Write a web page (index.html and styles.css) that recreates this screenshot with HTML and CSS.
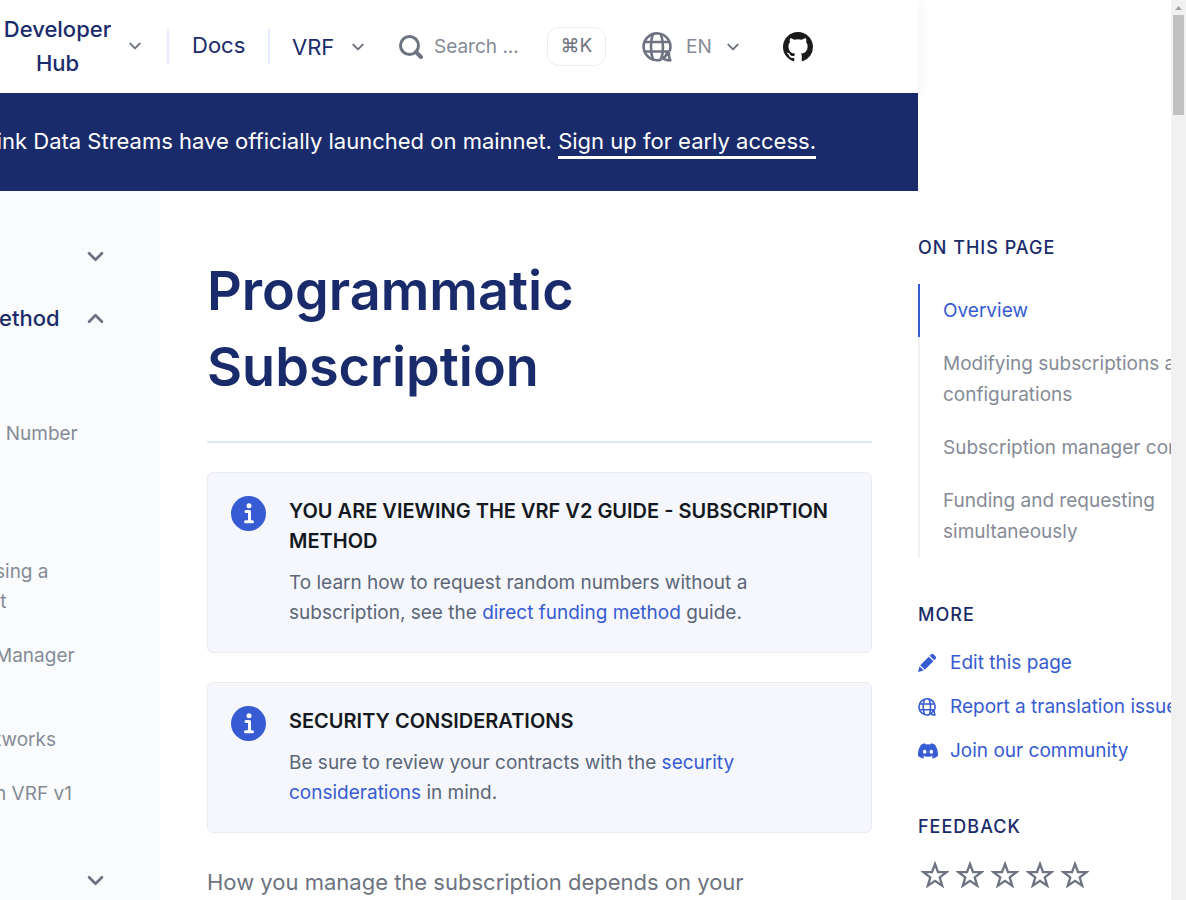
FILE: index.html
```html
<!DOCTYPE html>
<html lang="en">
<head>
<meta charset="utf-8">
<meta name="viewport" content="width=device-width, initial-scale=1">
<title>Programmatic Subscription</title>
<link rel="stylesheet" href="styles.css">
</head>
<body>
<svg class="defs" aria-hidden="true">
  <symbol id="down" viewBox="0 0 18 12"><path d="M2 2.5l7 7 7-7" fill="none" stroke="currentColor" stroke-width="3" stroke-linecap="round" stroke-linejoin="round"/></symbol>
  <symbol id="globe" viewBox="0 0 30 30">
    <g fill="none" stroke="currentColor" stroke-width="2.6" stroke-linejoin="round">
      <path d="M27.600 19.400A13.400 13.400 0 1 0 19.500 27.400"/>
      <path d="M11 28C8.300 20 8.300 9 11 1.800M18.500 1.800C20.800 7 21.200 13 20.800 19.500M2 10h26M2 19.500h25.500"/>
      <path d="M27 20c-.4 3 .2 5.800 1.300 8.300-2.800.2-5.500-.5-7.800-1.900 2.500-1.200 4.200-3.500 4.800-6.400"/>
      <path d="M20.800 19.500c-.3 3-.9 5-1.800 7.500"/>
    </g>
  </symbol>
  <symbol id="info" viewBox="0 0 35 35">
    <circle cx="17.5" cy="17.500" r="17.500" fill="#375bd2"/>
    <circle cx="18" cy="9.800" r="2.500" fill="#fff"/>
    <path d="M15 15.500h3.500v10M14.500 25.800h7" fill="none" stroke="#fff" stroke-width="3" stroke-linecap="round" stroke-linejoin="round"/>
  </symbol>
  <symbol id="star" viewBox="0 0 28 28"><path d="M14 3l3 8.200h8.500l-6.800 5.200 2.500 8.300-7.200-4.900-7.200 4.900 2.500-8.300-6.800-5.200H11z" fill="none" stroke="currentColor" stroke-width="2.300"/></symbol>
</svg>
<div class="page">
  <div class="shell">
    <header class="header">
      <button class="hub" type="button"><span class="hub-name">Developer Hub</span><svg class="chev"><use href="#down"/></svg></button>
      <a class="docs" href="#docs">Docs</a>
      <button class="product" type="button">VRF<svg class="chev"><use href="#down"/></svg></button>
      <label class="search">
        <svg class="search-icon" viewBox="0 0 24 24" aria-hidden="true"><circle cx="10.500" cy="10.500" r="9" fill="none" stroke="currentColor" stroke-width="3"/><path d="M17 17l5 5" stroke="currentColor" stroke-width="4" stroke-linecap="round"/></svg>
        <input class="search-input" type="text" placeholder="Search ..." aria-label="Search">
      </label>
      <kbd class="shortcut">⌘K</kbd>
      <label class="language"><svg class="language-icon"><use href="#globe"/></svg>
        <select class="language-select" aria-label="Language"><option>EN</option></select><svg class="chev"><use href="#down"/></svg></label>
      <a class="github" href="#github" aria-label="GitHub"><svg viewBox="0 0 16 16"><path fill="currentColor" d="M8 0C3.58 0 0 3.58 0 8c0 3.54 2.29 6.53 5.47 7.59.4.07.55-.17.55-.38 0-.19-.01-.82-.01-1.49-2.01.37-2.53-.49-2.69-.94-.09-.23-.48-.94-.82-1.13-.28-.15-.68-.52-.01-.53.63-.01 1.08.58 1.23.82.72 1.21 1.87.87 2.33.66.07-.52.28-.87.51-1.07-1.78-.2-3.64-.89-3.64-3.95 0-.87.31-1.59.82-2.15-.08-.2-.36-1.02.08-2.12 0 0 .67-.21 2.2.82.64-.18 1.32-.27 2-.27s1.36.09 2 .27c1.53-1.04 2.2-.82 2.2-.82.44 1.1.16 1.92.08 2.12.51.56.82 1.27.82 2.15 0 3.07-1.87 3.75-3.65 3.95.29.25.54.73.54 1.48 0 1.07-.01 1.93-.01 2.2 0 .21.15.46.55.38A8.01 8.01 0 0 0 16 8c0-4.42-3.58-8-8-8z"/></svg></a>
    </header>
    <div class="banner"><p>Chainlink Data Streams have officially launched on mainnet. <a href="#signup">Sign up for early access.</a></p></div>
    <div class="columns">
      <nav class="sidebar" aria-label="Documentation">
        <button class="section" type="button" aria-label="Expand section"><svg class="chev-lg"><use href="#down"/></svg></button>
        <button class="section" type="button"><span>ethod</span><svg class="chev-lg open"><use href="#down"/></svg></button>
        <ul class="links">
          <li><a href="#number">&nbsp;&nbsp;Number</a></li>
          <li class="after-gap"><a href="#contract">sing a<br>&nbsp;t</a></li>
          <li><a href="#manager">Manager</a></li>
          <li class="after-line"><a href="#networks">tworks</a></li>
          <li><a href="#migrate">n VRF v1</a></li>
        </ul>
        <button class="section" type="button" aria-label="Expand section"><svg class="chev-lg"><use href="#down"/></svg></button>
      </nav>
      <main class="content">
        <h1>Programmatic Subscription</h1>
        <hr>
        <aside class="note">
          <svg class="note-icon" aria-hidden="true"><use href="#info"/></svg>
          <div><h2>YOU ARE VIEWING THE VRF V2 GUIDE - SUBSCRIPTION METHOD</h2>
          <p>To learn how to request random numbers without a subscription, see the <a href="#direct">direct funding method</a> guide.</p></div>
        </aside>
        <aside class="note">
          <svg class="note-icon" aria-hidden="true"><use href="#info"/></svg>
          <div><h2>SECURITY CONSIDERATIONS</h2>
          <p>Be sure to review your contracts with the <a href="#security">security considerations</a> in mind.</p></div>
        </aside>
        <p class="lead">How you manage the subscription depends on your</p>
      </main>
    </div>
  </div>
  <aside class="rail">
    <div class="rail-inner">
      <h2>ON THIS PAGE</h2>
      <ul class="toc">
        <li class="current"><a href="#overview">Overview</a></li>
        <li><a href="#modify">Modifying subscriptions and configurations</a></li>
        <li><a href="#manager-contract">Subscription manager contract</a></li>
        <li><a href="#funding">Funding and requesting simultaneously</a></li>
      </ul>
      <h2>MORE</h2>
      <ul class="more">
        <li><a href="#edit"><svg class="small" viewBox="0 0 18 18"><path fill="currentColor" d="M1.500 12.200l4.300 4.300L0 18zM2.200 11.200L10.800 2.700l4.500 4.500-8.500 8.500zM11.700 1.800l1.200-1.200a2 2 0 0 1 2.900 0L17.400 2.200a2 2 0 0 1 0 2.900L16.200 6.300z"/></svg>Edit this page</a></li>
        <li><a href="#translation"><svg class="small"><use href="#globe"/></svg>Report a translation issue</a></li>
        <li><a href="#community"><svg class="discord" viewBox="0 0 16 16"><path fill="currentColor" d="M13.545 2.907a13.2 13.2 0 0 0-3.257-1.011.05.05 0 0 0-.052.025c-.141.25-.297.577-.406.833a12.2 12.2 0 0 0-3.658 0 8 8 0 0 0-.412-.833.05.05 0 0 0-.052-.025c-1.125.194-2.22.534-3.257 1.011a.04.04 0 0 0-.021.018C.356 6.024-.213 9.047.066 12.032q.003.022.021.037a13.3 13.3 0 0 0 3.995 2.02.05.05 0 0 0 .056-.019q.463-.63.818-1.329a.05.05 0 0 0-.01-.059l-.018-.011a9 9 0 0 1-1.248-.595.05.05 0 0 1-.02-.066l.015-.019q.127-.095.248-.195a.05.05 0 0 1 .051-.007c2.619 1.196 5.454 1.196 8.041 0a.05.05 0 0 1 .053.007q.121.1.248.195a.05.05 0 0 1-.004.085 8 8 0 0 1-1.249.594.05.05 0 0 0-.03.03.05.05 0 0 0 .003.041c.24.465.515.909.817 1.329a.05.05 0 0 0 .056.019 13.2 13.2 0 0 0 4.001-2.02.05.05 0 0 0 .021-.037c.334-3.451-.559-6.449-2.366-9.106a.03.03 0 0 0-.02-.019m-8.198 7.307c-.789 0-1.438-.724-1.438-1.612s.637-1.613 1.438-1.613c.807 0 1.450.730 1.438 1.613 0 .888-.637 1.612-1.438 1.612m5.316 0c-.788 0-1.438-.724-1.438-1.612s.637-1.613 1.438-1.613c.807 0 1.451.730 1.438 1.613 0 .888-.631 1.612-1.438 1.612"/></svg>Join our community</a></li>
      </ul>
      <h2>FEEDBACK</h2>
      <div class="stars">
        <button type="button" aria-label="1 star"><svg><use href="#star"/></svg></button>
        <button type="button" aria-label="2 stars"><svg><use href="#star"/></svg></button>
        <button type="button" aria-label="3 stars"><svg><use href="#star"/></svg></button>
        <button type="button" aria-label="4 stars"><svg><use href="#star"/></svg></button>
        <button type="button" aria-label="5 stars"><svg><use href="#star"/></svg></button>
      </div>
    </div>
  </aside>
</div>
<div class="scrollbar" aria-hidden="true">
  <svg class="arrow" viewBox="0 0 7 4"><path d="M3.500 0L7 4H0z" fill="#a3a3a3"/></svg>
  <div class="thumb"></div>
</div>
</body>
</html>
```

FILE: styles.css
```css
* { box-sizing: border-box; }
body {
  margin: 0;
  display: flex;
  height: 100vh;
  overflow: hidden;
  background: #fff;
  color: #6d7380;
  font: 19px/30px Inter, "Liberation Sans", sans-serif;
}
h1, h2, p, ul { margin: 0; padding: 0; font-weight: 400; }
ul { list-style: none; }
a { color: #375bd2; text-decoration: none; }
button { border: 0; padding: 0; background: none; font: inherit; color: inherit; text-align: start; }
svg { display: block; flex: none; }
.defs { position: absolute; width: 0; height: 0; }

.page { flex: 1; min-width: 0; display: grid; grid-template-columns: minmax(0, 1fr) 253px; overflow: hidden; }
.shell { display: flex; flex-direction: column; min-width: 0; }

.header {
  display: flex;
  align-items: center;
  height: 93px;
  box-shadow: 0 0 16px rgba(0, 0, 0, .06);
  color: #6d7380;
  flex: none;
}
.chev { width: 12px; height: 8px; color: #6d7380; }
.hub { display: flex; align-items: center; width: 167px; gap: 14px; padding-bottom: 2px; font-size: 22px; line-height: 34px; font-weight: 500; color: #1a2b6b; }
.hub-name { width: 115px; text-align: center; }
.docs { width: 101px; height: 35px; line-height: 33px; padding-left: 23px; font-size: 22px; color: #1a2b6b; border-left: 2px solid #e4ecfb; }
.product { display: flex; align-items: center; justify-content: space-between; width: 96px; height: 35px; padding-left: 22px; font-size: 22px; color: #1a2b6b; border-left: 2px solid #e4ecfb; }
.search { display: flex; align-items: center; gap: 11px; width: 148px; margin-left: 35px; }
.search-icon { width: 24px; height: 24px; }
.search-input { width: 100px; border: 0; padding: 0; background: none; font: inherit; color: inherit; }
.search-input::placeholder { color: #858b96; opacity: 1; }
.shortcut { width: 59px; height: 39px; border: 1px solid #ececef; border-radius: 12px; font: inherit; line-height: 36px; text-align: center; }
.language { display: flex; align-items: center; width: 97px; margin-left: 36px; }
.language-icon { width: 30px; height: 30px; margin-right: 14px; }
.language-select { appearance: none; width: 41px; border: 0; padding: 0; background: none; font: inherit; color: #858b96; }
.github { margin-left: 44px; color: #1b1919; }
.github svg { width: 30px; height: 30px; }

.banner { display: flex; justify-content: flex-end; align-items: center; height: 98px; padding: 0 102px 2px 0; background: #1a2b6b; color: #fff; font-size: 22px; white-space: nowrap; flex: none; overflow: hidden; }
.banner a { color: #fff; border-bottom: 3px solid #fff; padding-bottom: 2px; }

.columns { flex: 1; display: grid; grid-template-columns: 160px minmax(0, 1fr); }
.sidebar { background: #fafbfd; padding-top: 34px; overflow: hidden; }
.section { display: flex; align-items: center; justify-content: space-between; width: 105px; height: 62px; margin-left: -1px; font-size: 22px; font-weight: 500; color: #1a2b6b; }
.section svg:only-child { margin-left: auto; }
.chev-lg { width: 17px; height: 11px; color: #6d7380; }
.open { transform: rotate(180deg); }
.links { margin-left: -5px; padding: 70px 0 16px; }
.links li { padding-bottom: 24px; white-space: nowrap; }
.links a { color: #858b96; }
.links .after-gap { padding-top: 84px; }
.links .after-line { padding-top: 30px; }

.content { padding: 62px 46px 0 47px; }
h1 { font-size: 54px; line-height: 76px; font-weight: 600; color: #1a2b6b; }
hr { height: 2px; margin: 36px 0 29px; border: 0; background: #dfe7fb; }
.note { display: flex; gap: 23px; padding: 23px 23px 24px; margin-bottom: 29px; background: #f5f7fd; border: 1px solid #ececf0; border-radius: 6px; }
.note-icon { width: 35px; height: 35px; }
.note h2 { margin-bottom: 12px; font-size: 20px; font-weight: 600; color: #141921; }
.note p { color: #5b6678; }
.lead { margin-top: 34px; font-size: 22px; white-space: nowrap; }

.rail { padding-top: 233px; overflow: hidden; }
.rail-inner { width: 320px; }
.rail h2 { font-size: 18px; font-weight: 500; letter-spacing: 1px; color: #1a2b6b; }
.toc { margin: 21px 0 42px; line-height: 31px; }
.toc li { padding: 11px 0 11px 23px; border-left: 2px solid #f1f1f3; }
.toc a { color: #858b96; }
.toc .current { border-color: #375bd2; }
.toc .current a { color: #375bd2; }
.more { display: grid; gap: 14px; margin: 18px 0 46px; }
.more a { display: flex; align-items: center; white-space: nowrap; }
.small { width: 18px; height: 18px; margin-right: 14px; }
.discord { width: 20px; height: 20px; margin-right: 12px; }
.stars { display: flex; gap: 7px; margin: 19px 0 0 3px; color: #6d7380; }
.stars svg { width: 28px; height: 28px; }

.scrollbar { flex: none; width: 15px; padding: 6px 2px 0; background: #f1f1f1; }
.arrow { width: 7px; height: 4px; margin: 0 auto 5px; }
.thumb { height: 100px; background: #c1c1c1; }
```
